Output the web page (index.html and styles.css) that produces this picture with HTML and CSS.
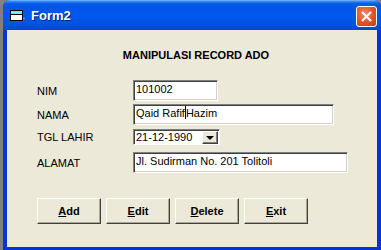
FILE: index.html
```html
<!DOCTYPE html>
<html lang="en">

<head>
    <meta charset="UTF-8">
    <title>Form2</title>
    <link rel="stylesheet" href="styles.css">
</head>

<body>

    <div class="desk">
        <div class="window">
            <div class="titlebar">
                <svg class="titlebar__icon" width="16" height="12" viewBox="0 0 16 12">
                    <rect x="0.5" y="0.5" width="12" height="10" fill="#fff" stroke="#000"/>
                    <rect x="1" y="1" width="11" height="3" fill="#6cf0f0"/>
                    <line x1="1" y1="4.5" x2="12" y2="4.5" stroke="#000"/>
                    <path d="M13 7 L15.5 8.5 L13 10 Z" fill="#888"/>
                </svg>
                <span class="titlebar__text">Form2</span>
                <div class="titlebar__close">
                    <svg width="13" height="13" viewBox="0 0 13 13">
                        <path d="M2 2 L11 11 M11 2 L2 11" stroke="#fff" stroke-width="2.2"/>
                    </svg>
                </div>
            </div>

            <div class="client">
                <h1 class="heading">MANIPULASI RECORD ADO</h1>

                <div class="form">
                    <div class="row row--nim">
                        <label class="row__label">NIM</label>
                        <div class="textbox textbox--short">101002</div>
                    </div>
                    <div class="row row--nama">
                        <label class="row__label">NAMA</label>
                        <div class="textbox textbox--mid">Qaid Rafif<span class="caret"></span>Hazim</div>
                    </div>
                    <div class="row row--tgl">
                        <label class="row__label">TGL LAHIR</label>
                        <div class="combo">
                            <span class="combo__text">21-12-1990</span>
                            <span class="combo__btn"><span class="arrow"></span></span>
                        </div>
                    </div>
                    <div class="row row--alamat">
                        <label class="row__label">ALAMAT</label>
                        <div class="textbox textbox--long">Jl. Sudirman No. 201 Tolitoli</div>
                    </div>
                </div>

                <div class="buttons">
                    <button class="btn"><u>A</u>dd</button>
                    <button class="btn"><u>E</u>dit</button>
                    <button class="btn"><u>D</u>elete</button>
                    <button class="btn"><u>E</u>xit</button>
                </div>
            </div>
        </div>
    </div>

</body>

</html>
```

FILE: styles.css
```css
html {
    box-sizing: border-box;
}

*,
*:before,
*:after {
    box-sizing: inherit;
}

body {
    margin: 0;
    width: 381px;
    height: 250px;
    overflow: hidden;
    font-family: 'Liberation Sans', Arial, sans-serif;
    font-size: 11px;
    color: #000;
}

.desk {
    display: flex;
    height: 250px;
    background: #808080;
    padding-left: 3px;
}

.window {
    width: 378px;
    height: 250px;
    display: flex;
    flex-direction: column;
    background: #0831d9;
    border-radius: 7px 7px 0 0;
    overflow: hidden;
}

.titlebar {
    height: 30px;
    flex: none;
    display: flex;
    align-items: center;
    padding: 0 4px 0 7px;
    background: linear-gradient(180deg, #3d95ff 0%, #0a5fe8 8%, #0055e5 20%, #0058ee 50%, #0054e3 80%, #0048d0 100%);
    border-top: 1px solid #6aa7ff;
    color: #fff;
}

.titlebar__icon {
    margin-right: 5px;
    margin-top: 1px;
}

.titlebar__text {
    font-weight: bold;
    font-size: 13px;
    text-shadow: 1px 1px 0 #0a1e78;
    flex: 1;
}

.titlebar__close {
    width: 21px;
    height: 21px;
    margin-top: 2px;
    border: 1px solid #fff;
    border-radius: 3px;
    background: radial-gradient(circle at 40% 35%, #f08b6a 0%, #e35a30 45%, #c23c12 100%);
    display: flex;
    align-items: center;
    justify-content: center;
}

.client {
    flex: 1;
    margin: 0 4px 3px 4px;
    background: #ece9d8;
    display: flex;
    flex-direction: column;
}

.heading {
    margin: 18px 0 0 0;
    padding-left: 8px;
    text-align: center;
    font-size: 11px;
    font-weight: bold;
    height: 14px;
    line-height: 14px;
}

.form {
    margin-top: 18px;
    padding-left: 30px;
}

.row {
    display: flex;
    align-items: center;
}

.row__label {
    width: 96px;
}

.row--nama {
    margin-top: 3px;
}

.row--tgl {
    margin-top: 4px;
}

.row--alamat {
    margin-top: 7px;
}

.textbox {
    height: 21px;
    line-height: 17px;
    padding: 0 2px;
    background: #fff;
    border: 1px solid;
    border-color: #808080 #fff #fff #808080;
    box-shadow: inset 1px 1px 0 #404040, inset -1px -1px 0 #d4d0c8;
    white-space: nowrap;
}

.textbox--short {
    width: 85px;
}

.textbox--mid {
    width: 201px;
}

.textbox--long {
    width: 215px;
}

.caret {
    display: inline-block;
    width: 1px;
    height: 13px;
    background: #000;
    vertical-align: -2px;
}

.combo {
    width: 87px;
    height: 16px;
    display: flex;
    align-items: center;
    background: #fff;
    border: 1px solid;
    border-color: #808080 #fff #fff #808080;
    box-shadow: inset 1px 1px 0 #404040;
    padding: 1px 1px 0 2px;
}

.combo__text {
    flex: 1;
    line-height: 13px;
}

.combo__btn {
    width: 16px;
    height: 13px;
    background: #ece9d8;
    border: 1px solid;
    border-color: #fff #404040 #404040 #fff;
    box-shadow: inset -1px -1px 0 #808080;
    display: flex;
    align-items: center;
    justify-content: center;
}

.arrow {
    width: 0;
    height: 0;
    border-left: 4px solid transparent;
    border-right: 4px solid transparent;
    border-top: 4px solid #000;
}

.buttons {
    display: flex;
    gap: 5px;
    margin-top: 25px;
    padding-left: 30px;
}

.btn {
    width: 64px;
    height: 26px;
    padding: 0;
    background: #ece9d8;
    border: 1px solid;
    border-color: #fff #404040 #404040 #fff;
    box-shadow: inset -1px -1px 0 #aca899;
    font-family: 'Liberation Sans', Arial, sans-serif;
    font-size: 11px;
    font-weight: bold;
    color: #000;
}
```
